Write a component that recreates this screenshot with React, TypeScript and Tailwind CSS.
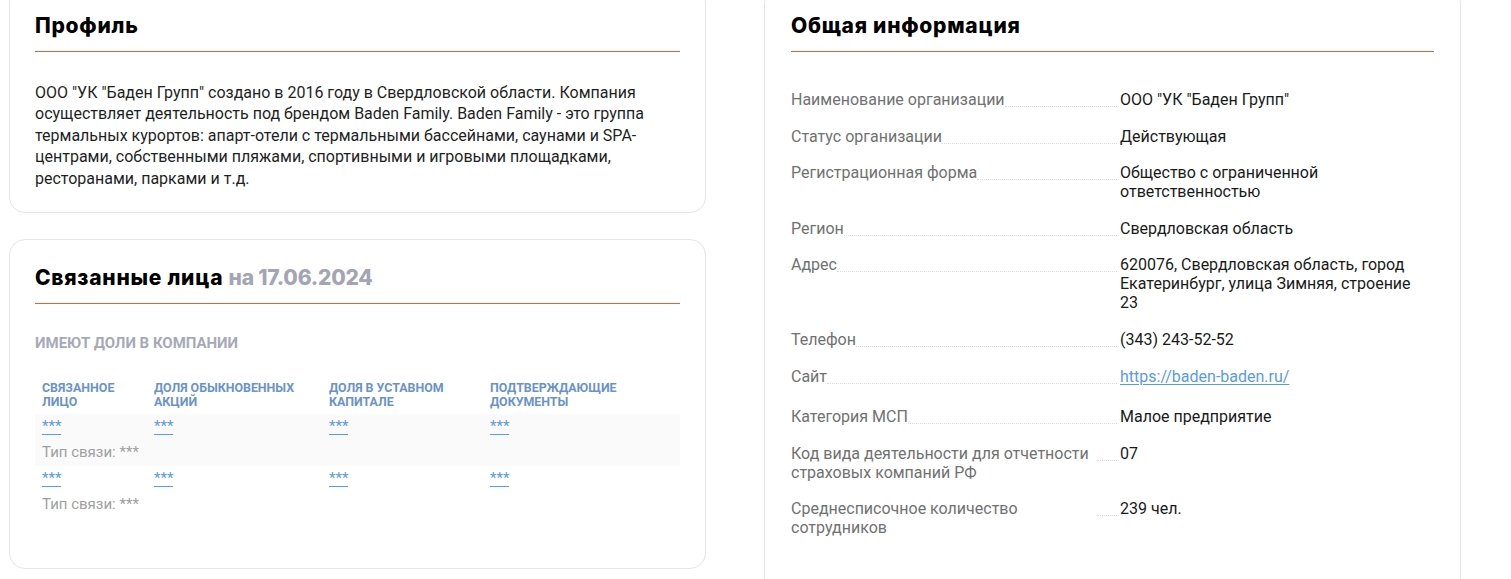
import React from 'react'

const HEAD =
  "font-['Inter',sans-serif] text-[21px] font-extrabold leading-[26px] tracking-[0.035em] text-black"
const BODY = "font-['Roboto',sans-serif]"

const INFO: { label: string; value: React.ReactNode; extra?: string }[] = [
  { label: 'Наименование организации', value: 'ООО "УК "Баден Групп"' },
  { label: 'Статус организации', value: 'Действующая' },
  { label: 'Регистрационная форма', value: 'Общество с ограниченной ответственностью' },
  { label: 'Регион', value: 'Свердловская область' },
  { label: 'Адрес', value: '620076, Свердловская область, город Екатеринбург, улица Зимняя, строение 23' },
  { label: 'Телефон', value: '(343) 243-52-52' },
  {
    label: 'Сайт',
    value: (
      <a href="#" className="text-[#5b9be0] underline underline-offset-2">
        https://baden-baden.ru/
      </a>
    ),
    extra: 'pb-[4px]',
  },
  { label: 'Категория МСП', value: 'Малое предприятие' },
  { label: 'Код вида деятельности для отчетности страховых компаний РФ', value: '07' },
  { label: 'Среднесписочное количество сотрудников', value: '239 чел.' },
]

const COLUMNS = ['Связанное лицо', 'Доля обыкновенных акций', 'Доля в уставном капитале', 'Подтверждающие документы']
const COL_W = ['w-[112px]', 'w-[175px]', 'w-[161px]', 'flex-1']

function CardHeading({ children }: { children: React.ReactNode }) {
  return (
    <div>
      <div className="pb-[12px]">{children}</div>
      <div className="h-px bg-[#e85d36]" />
    </div>
  )
}

function Stars() {
  return <span className="inline-block border-b border-[#5b9be0] text-[#5b9be0]">***</span>
}

function LinkedRow({ shaded }: { shaded?: boolean }) {
  return (
    <div
      className={`${shaded ? 'bg-[#fafafa]' : ''} pt-[4px] pb-[6px] text-[15px] leading-[16px]`}
    >
      <div className="flex">
        {COL_W.map((w, i) => (
          <div key={i} className={`${w} px-[7px]`}>
            <Stars />
          </div>
        ))}
      </div>
      <div className="mt-[9px] px-[7px] text-[#a0a0a0]">Тип связи: ***</div>
    </div>
  )
}

export default function App() {
  return (
    <div className={`h-[579px] overflow-hidden bg-white ${BODY}`}>
      <div className="-mt-[13px] flex items-start gap-[58px] pl-[9px]">
        {/* left column */}
        <div className="flex w-[697px] flex-col gap-[26px]">
          {/* Profile */}
          <div className="rounded-[16px] border border-[#e6e6e6] px-[25px] pt-[25px] pb-[23px]">
            <CardHeading>
              <h2 className={HEAD}>Профиль</h2>
            </CardHeading>
            <p className="mt-[30px] text-[16px] leading-[21.4px] text-[#1f1f1f]">
              ООО "УК "Баден Групп" создано в 2016 году в Свердловской области. Компания осуществляет деятельность под
              брендом Baden Family. Baden Family - это группа термальных курортов: апарт-отели с термальными
              бассейнами, саунами и SPA-центрами, собственными пляжами, спортивными и игровыми площадками,
              ресторанами, парками и т.д.
            </p>
          </div>

          {/* Related persons */}
          <div className="rounded-[16px] border border-[#e6e6e6] px-[25px] pt-[25px] pb-[50px]">
            <CardHeading>
              <h2 className={HEAD}>
                Связанные лица{' '}
                <span className="tracking-[-0.01em] text-[#a3a5b4]">на 17.06.2024</span>
              </h2>
            </CardHeading>
            <h3 className="mt-[30px] text-[15px] font-bold uppercase leading-[18px] text-[#a7a9b8]">
              Имеют доли в компании
            </h3>
            <div className="mt-[29px]">
              <div className="flex pb-[5px]">
                {COLUMNS.map((c, i) => (
                  <div
                    key={c}
                    className={`${COL_W[i]} px-[7px] text-[12.4px] font-bold uppercase leading-[14px] text-[#6a93c8]`}
                  >
                    {c}
                  </div>
                ))}
              </div>
              <LinkedRow shaded />
              <LinkedRow />
            </div>
          </div>
        </div>

        {/* right column */}
        <div className="min-h-[640px] w-[697px] rounded-[16px] border border-[#e6e6e6] px-[26px] pt-[25px]">
          <CardHeading>
            <h2 className={HEAD}>Общая информация</h2>
          </CardHeading>
          <div className="mt-[38px] flex flex-col gap-[17.6px] text-[16px] leading-[19px]">
            {INFO.map((row) => (
              <div key={row.label} className={`flex items-start ${row.extra ?? ''}`}>
                <div className="flex w-[329px] shrink-0 items-start pr-[3px]">
                  <span className="max-w-[306px] text-[#717171]">{row.label}</span>
                  <span className="h-[17px] min-w-[10px] flex-1 border-b border-dotted border-[#dadada]" />
                </div>
                <div className="w-[300px] text-[#1a1a1a]">{row.value}</div>
              </div>
            ))}
          </div>
        </div>
      </div>
    </div>
  )
}
